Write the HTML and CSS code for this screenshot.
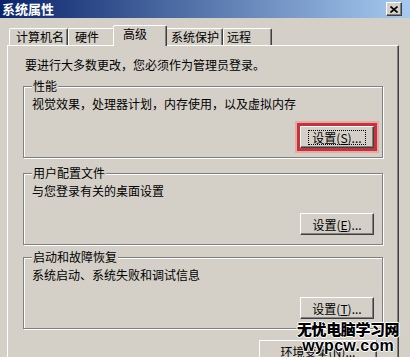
FILE: index.html
```html
<!DOCTYPE html>
<html lang="zh-CN">
<head>
    <meta charset="UTF-8">
    <title>系统属性</title>
    <link rel="stylesheet" href="styles.css">
</head>
<body>
    <div class="window">
        <div class="titlebar">
            <span class="title">系统属性</span>
            <span class="close">
                <svg width="8" height="7" viewBox="0 0 8 7"><path d="M0.5 0.5 L7.5 6.5 M7.5 0.5 L0.5 6.5" stroke="#000" stroke-width="1.6"/></svg>
            </span>
        </div>

        <div class="tabs">
            <div class="tab tab-name">计算机名</div>
            <div class="tab tab-hw">硬件</div>
            <div class="tab tab-adv active">高级</div>
            <div class="tab tab-prot">系统保护</div>
            <div class="tab tab-remote">远程</div>
        </div>

        <div class="panel">
            <p class="note">要进行大多数更改，您必须作为管理员登录。</p>

            <div class="group first">
                <div class="group-title">性能</div>
                <p class="group-desc">视觉效果，处理器计划，内存使用，以及虚拟内存</p>
                <div class="actions">
                    <button class="btn marked"><span class="focus">设置(<u>S</u>)...</span></button>
                </div>
            </div>

            <div class="group second">
                <div class="group-title">用户配置文件</div>
                <p class="group-desc">与您登录有关的桌面设置</p>
                <div class="actions">
                    <button class="btn">设置(<u>E</u>)...</button>
                </div>
            </div>

            <div class="group third">
                <div class="group-title">启动和故障恢复</div>
                <p class="group-desc">系统启动、系统失败和调试信息</p>
                <div class="actions">
                    <button class="btn">设置(<u>T</u>)...</button>
                </div>
            </div>

            <div class="actions bottom">
                <button class="btn wide">环境变量(<u>N</u>)...</button>
            </div>
        </div>

        <div class="watermark">
            <div class="wm-cn">无忧电脑学习网</div>
            <div class="wm-en">wypcw.com</div>
        </div>
    </div>
</body>
</html>
```

FILE: styles.css
```css
* {
    box-sizing: border-box;
}

body {
    margin: 0;
    background-color: #d4d0c8;
    font-family: "Noto Sans CJK SC", "Liberation Sans", sans-serif;
    font-size: 12px;
    color: #000;
}

.window {
    position: relative;
    width: 410px;
    height: 357px;
    overflow: hidden;
    background-color: #d4d0c8;
}

/* title bar */
.titlebar {
    height: 18px;
    display: flex;
    align-items: center;
    justify-content: space-between;
    padding: 0 8px 0 2px;
    background: linear-gradient(to right, #0a246a, #a6caf0);
}

.title {
    color: #fff;
    font-weight: bold;
    font-size: 13px;
    line-height: 18px;
}

.close {
    width: 16px;
    height: 14px;
    display: flex;
    align-items: center;
    justify-content: center;
    background-color: #d4d0c8;
    border: 1px solid;
    border-color: #fff #404040 #404040 #fff;
    box-shadow: inset -1px -1px 0 #808080;
}

/* tabs */
.tabs {
    display: flex;
    align-items: flex-end;
    height: 20px;
    margin-top: 7px;
    padding-left: 9px;
    position: relative;
    z-index: 1;
}

.tab {
    height: 17px;
    padding-left: 6px;
    line-height: 15px;
    font-size: 12px;
    background-color: #d4d0c8;
    border: 1px solid;
    border-bottom: none;
    border-color: #fff #404040 transparent #fff;
    border-radius: 2px 2px 0 0;
    box-shadow: inset -1px 0 0 #808080;
}

.tab-name { width: 59px; }
.tab-hw { width: 47px; }
.tab-adv { width: 54px; }
.tab-prot { width: 58px; padding-left: 5px; }
.tab-remote { width: 49px; padding-left: 3px; }

.tab.active {
    height: 21px;
    margin: 0 -2px -1px;
    padding-left: 9px;
    line-height: 16px;
    position: relative;
    z-index: 2;
}

/* tab page */
.panel {
    width: 392px;
    height: 320px;
    margin-left: 7px;
    padding: 12px 15px 0;
    border: 1px solid;
    border-color: #fff #404040 #404040 #fff;
    box-shadow: inset -1px -1px 0 #808080;
}

.note {
    margin: 0;
    padding-left: 2px;
    line-height: 14px;
}

.group {
    border: 1px solid #808080;
    box-shadow: inset 1px 1px 0 #fff, 1px 1px 0 #fff;
    padding: 0 8px 9px 8px;
}

.group.first { margin-top: 14px; }
.group.second { margin-top: 15px; }
.group.third { margin-top: 12px; }

.group-title {
    width: fit-content;
    margin-top: -8px;
    padding: 0 1px;
    line-height: 14px;
    background-color: #d4d0c8;
}

.group-desc {
    margin: 4px 0 0;
    line-height: 14px;
}

.actions {
    display: flex;
    justify-content: flex-end;
    margin-top: 15px;
}

.actions.bottom {
    margin-top: 11px;
    padding-right: 6px;
}

.btn {
    width: 74px;
    height: 22px;
    padding: 0;
    font-family: inherit;
    font-size: 12px;
    color: #000;
    background-color: #d4d0c8;
    border: 1px solid;
    border-color: #fff #404040 #404040 #fff;
    box-shadow: inset -1px -1px 0 #808080;
    display: flex;
    align-items: center;
    justify-content: center;
}

.btn.wide {
    width: 118px;
}

.btn.marked {
    outline: 3px solid #c8323a;
    box-shadow: inset -1px -1px 0 #808080, 0 0 0 5px rgba(236, 140, 140, 0.55);
}

.focus {
    padding: 0 3px;
    border: 1px dotted #000;
    line-height: 13px;
}

/* site watermark over the corner */
.watermark {
    position: absolute;
    left: 297px;
    top: 320px;
    text-align: center;
    color: #000;
    text-shadow: 1px 0 0 #fff, -1px 0 0 #fff, 0 1px 0 #fff, 0 -1px 0 #fff;
}

.wm-cn {
    font-size: 15px;
    font-weight: 900;
    line-height: 17px;
    letter-spacing: -0.4px;
}

.wm-en {
    font-family: "Liberation Sans", sans-serif;
    font-size: 16px;
    font-weight: bold;
    line-height: 17px;
    letter-spacing: 0.3px;
}
```
